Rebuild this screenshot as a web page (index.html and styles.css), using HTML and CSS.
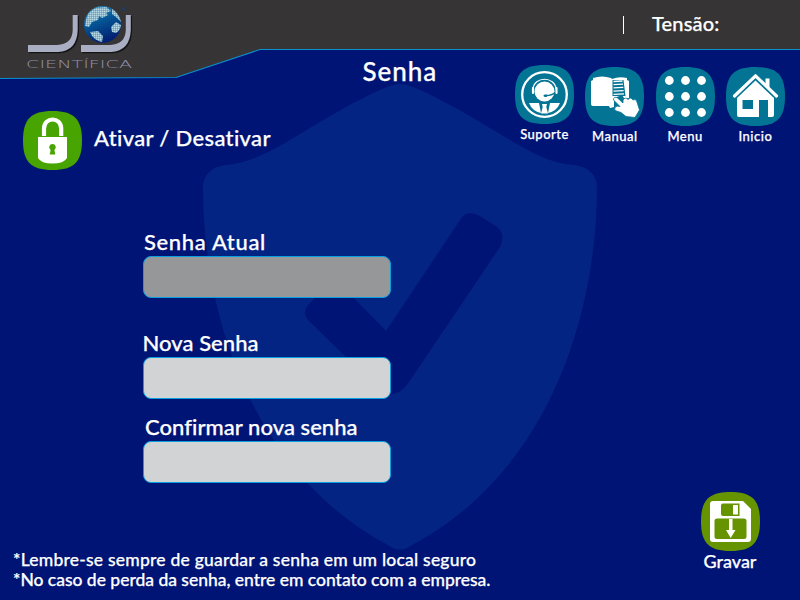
FILE: index.html
```html
<!DOCTYPE html>
<html lang="pt-BR">
<head>
<meta charset="utf-8">
<title>Senha</title>
<link rel="stylesheet" href="styles.css">
</head>
<body>
<div class="screen">
  <svg class="backdrop" viewBox="0 0 800 600" aria-hidden="true">
    <path fill="#042484" d="M400 84C395 84 389 86 382 89C342 107 306 131 283 144C262 156 245 163 226 165C211 167 203 175 203 188C203 300 243 468 388 545Q400 554 412 545C557 468 597 300 597 188C597 175 589 167 574 165C555 164 538 156 517 144C494 131 458 107 418 89C411 86 405 84 400 84Z"/>
    <path fill="#001475" d="M462 217Q468 210 480 216L497 227Q506 234 500 247L407 385Q395 399 382 392L309 321Q301 313 309 304L317 296Q334 284 352 296L386 331Z"/>
    <path fill="#373435" d="M0 0H800V49.500H260L176 77.500L0 78.500Z"/>
    <path fill="none" stroke="#0b8fce" stroke-width="1.100" d="M0 78.500L176 77.500L260 49.500H800"/>
  </svg>

  <header class="header">
    <svg class="logo" viewBox="0 0 125 78" width="125" height="78">
      <defs>
        <linearGradient id="sea" x1="0" y1="0" x2="0.400" y2="1"><stop offset="0" stop-color="#4aa9d1"/><stop offset=".5" stop-color="#075b9c"/><stop offset="1" stop-color="#001b70"/></linearGradient>
        <pattern id="mesh" width="2" height="2" patternUnits="userSpaceOnUse"><path d="M0 0H2M0 0V2" stroke="#003d78" stroke-width=".7" opacity=".65"/></pattern>
        <g id="hooks"><path d="M13 45H42Q57.500 44 57.700 30V15H62.700V30Q62 51 43 52H13Z"/><path d="M66 45H95Q110.500 44 110.800 30V15H115.800V30Q115 51 96 52H66Z"/></g>
      </defs>
      <use href="#hooks" x="1.300" y="1.300" fill="#151517"/>
      <use href="#hooks" fill="#a9aec3"/>
      <circle cx="87.500" cy="24.500" r="18.500" fill="url(#sea)"/>
      <path fill="#b9d9e4" d="M71 20Q73 11 81 8L91 7L96 11L91 13L93 15L87 18L84 16L83 20L77 22L74 27L70 26ZM97 9Q104 13 106 22L101 17L97 14ZM101 22L106 25Q105 31 101 33L97 32L96 27ZM75 32L83 31L88 36L87 42Q78 40 75 32Z"/>
      <circle cx="87.500" cy="24.500" r="18.500" fill="url(#mesh)"/>
      <circle cx="108.500" cy="9" r="2" fill="#243a58"/>
      <text class="logo-name" x="11" y="68" textLength="106" lengthAdjust="spacingAndGlyphs">CIENTÍFICA</text>
    </svg>
    <div class="status"><span class="divider"></span><span class="tension">Tensão:</span></div>
  </header>

  <section class="toolbar">
    <div class="lock">
      <svg class="tile" viewBox="0 0 59 59">
        <path fill="#48a400" d="M29.500 0C51 0 59 8 59 29.500S51 59 29.500 59S0 51 0 29.500S8 0 29.500 0Z"/>
        <path fill="none" stroke="#fff" stroke-width="4.200" d="M21 25V17.500C21 5.500 38.200 5.500 38.200 17.500V25"/>
        <path fill="#fff" d="M15 26H44V47Q41 52.500 29.500 52.500T15 47Z"/>
        <path fill="#48a400" d="M29.500 33A3.300 3.300 0 0 0 27.600 39L26.700 43.500H32.300L31.400 39A3.300 3.300 0 0 0 29.500 33Z"/>
      </svg>
      <span class="lock-label">Ativar / Desativar</span>
    </div>
    <h1 class="title">Senha</h1>
    <nav class="nav">
      <a class="nav-item nav-support">
        <svg class="tile" viewBox="0 0 59 59">
          <path fill="#047494" d="M29.500 0C51 0 59 8 59 29.500S51 59 29.500 59S0 51 0 29.500S8 0 29.500 0Z"/>
          <circle cx="29.500" cy="29.500" r="22.300" fill="none" stroke="#fff" stroke-width="2.300"/>
          <circle cx="29.500" cy="26.500" r="10" fill="#fff"/>
          <path fill="none" stroke="#fff" stroke-width="1.200" d="M18 24C19 11 40 11 41 24"/>
          <path fill="none" stroke="#fff" stroke-width="2.200" stroke-linecap="round" d="M18 23V28M41.500 23V28"/>
          <path fill="none" stroke="#047494" stroke-width="1.300" d="M40 27.500Q37 30.500 31 30.500"/>
          <ellipse cx="30.500" cy="30.700" rx="2" ry="1.200" fill="#047494"/>
          <path fill="#fff" d="M14 38H24L26 48Q17 46 14 38ZM45 38H35L33 48Q42 46 45 38ZM27 39H32L31.300 42L33 48.500H26L27.700 42Z"/>
        </svg>
        <span>Suporte</span>
      </a>
      <a class="nav-item nav-manual">
        <svg class="tile" viewBox="0 0 59 59">
          <path fill="#047494" d="M29.500 0C51 0 59 8 59 29.500S51 59 29.500 59S0 51 0 29.500S8 0 29.500 0Z"/>
          <path fill="#fff" d="M6 14L8 13V11Q17 8 26 11L27 12Q34 9 42 11V13L44 14V31H39L37 28L29 31V40L25 41L24 39H8Q6 39 6 37Z"/>
          <path fill="#047494" d="M27.500 13H38.500L40.500 29H27.500Z"/>
          <path fill="none" stroke="#fff" stroke-width="1.300" d="M28.500 14.500L37.500 14M28.500 17.700L38 17.200M28.500 20.900L38.300 20.400M28.500 24.100L38.600 23.600M28.500 27.300L39 26.800"/>
          <path fill="#fff" stroke="#047494" stroke-width=".8" d="M28.500 33Q28.500 29.500 32 30.500L38 36V33Q40.500 29.500 43 32.500Q46 29.500 48 33Q51 31 52 35L54.500 43L50 50.500L41 49.500L36 45.500L30 43.500Q28.500 40.500 32 39L35 39.500Z"/>
        </svg>
        <span>Manual</span>
      </a>
      <a class="nav-item nav-menu">
        <svg class="tile" viewBox="0 0 59 59">
          <path fill="#047494" d="M29.500 0C51 0 59 8 59 29.500S51 59 29.500 59S0 51 0 29.500S8 0 29.500 0Z"/>
          <g fill="#fff"><circle cx="13.300" cy="13.500" r="4.400"/><circle cx="29.500" cy="13.500" r="4.400"/><circle cx="45.500" cy="13.500" r="4.400"/><circle cx="13.300" cy="29.500" r="4.400"/><circle cx="29.500" cy="29.500" r="4.400"/><circle cx="45.500" cy="29.500" r="4.400"/><circle cx="13.300" cy="45.500" r="4.400"/><circle cx="29.500" cy="45.500" r="4.400"/><circle cx="45.500" cy="45.500" r="4.400"/></g>
        </svg>
        <span>Menu</span>
      </a>
      <a class="nav-item nav-home">
        <svg class="tile" viewBox="0 0 59 59">
          <path fill="#047494" d="M29.500 0C51 0 59 8 59 29.500S51 59 29.500 59S0 51 0 29.500S8 0 29.500 0Z"/>
          <path fill="none" stroke="#fff" stroke-width="3.200" stroke-linecap="round" stroke-linejoin="round" d="M8.500 29L29.500 8.800L50.500 29"/>
          <path fill="#fff" d="M39.500 11.500H43.500V21L39.500 17ZM29.500 13.500L48 31V48Q48 50 46 50H42V33H33V50H13Q11 50 11 48V31Z"/>
          <path fill="#047494" d="M16.500 33H27V42H16.500Z"/>
        </svg>
        <span>Inicio</span>
      </a>
    </nav>
  </section>

  <form class="form">
    <label class="field current"><span class="caption">Senha Atual</span><input type="password" disabled></label>
    <label class="field new"><span class="caption">Nova Senha</span><input type="password"></label>
    <label class="field confirm"><span class="caption">Confirmar nova senha</span><input type="password"></label>
  </form>

  <footer class="footer">
    <div class="notes">
      <p class="note-safe">*Lembre-se sempre de guardar a senha em um local seguro</p>
      <p class="note-lost">*No caso de perda da senha, entre em contato com a empresa.</p>
    </div>
    <div class="save">
      <svg class="tile" viewBox="0 0 59 59">
        <path fill="#659400" d="M29.500 0C51 0 59 8 59 29.500S51 59 29.500 59S0 51 0 29.500S8 0 29.500 0Z"/>
        <path fill="#fff" d="M12 9H42L50 17V47Q50 50 47 50H12Q9 50 9 47V12Q9 9 12 9Z"/>
        <path fill="#659400" d="M22 11.500H38.500V24H22Q20 24 20 22V13.500Q20 11.500 22 11.500ZM16 26.500H43Q45.500 26.500 45.500 29V44.500Q45.500 47 43 47H16Q13.500 47 13.500 44.500V29Q13.500 26.500 16 26.500Z"/>
        <path fill="#fff" d="M32 13H37V22.500H32ZM28 27H31.500V38H34.500L29.700 46L25 38H28Z"/>
      </svg>
      <span>Gravar</span>
    </div>
  </footer>
</div>
</body>
</html>
```
FILE: styles.css
```css
* { box-sizing: border-box; }
body { margin: 0; }
.screen {
  position: relative;
  display: flex;
  flex-direction: column;
  width: 800px;
  height: 600px;
  overflow: hidden;
  background: #001475;
  color: #fff;
  font-family: Lato, "Noto Sans", sans-serif;
  font-weight: 500;
  -webkit-text-stroke: .25px currentColor;
  white-space: nowrap;
}
.backdrop { position: absolute; inset: 0; width: 800px; height: 600px; }
.header, .toolbar, .form, .footer { position: relative; }
.header {
  display: flex;
  justify-content: space-between;
  align-items: flex-start;
  height: 50px;
  padding: 0 80px 0 15px;
}
.logo { flex: none; }
.logo-name { font: 11px "DejaVu Sans", sans-serif; font-weight: 200; fill: #8e92a8; -webkit-text-stroke: 0; }
.status { display: flex; align-items: flex-start; gap: 28px; height: 49px; }
.divider { width: 1.5px; height: 18px; margin-top: 16px; background: #fff; }
.tension { width: 68px; font-size: 20px; line-height: 44px; margin-top: 1px; letter-spacing: .15px; }
.toolbar {
  display: grid;
  grid-template-columns: 340px 151px 1fr;
  height: 120px;
  padding-left: 23px;
}
.tile { display: block; flex: none; width: 59px; height: 59px; }
.lock { display: flex; align-items: center; gap: 12.5px; height: 59px; margin: 61px 0 0 -.5px; }
.lock-label { font-size: 22px; line-height: 28px; margin-top: -6px; letter-spacing: .34px; }
.title { margin: 6px 0 0 -.5px; font-size: 26px; font-weight: 500; line-height: 30px; letter-spacing: .95px; }
.nav { display: flex; align-items: flex-start; gap: 11.300px; margin: 17px 0 0 1px; }
.nav-item {
  display: flex;
  flex-direction: column;
  align-items: center;
  width: 59px;
  font-size: 13px;
  line-height: 20px;
  letter-spacing: .5px;
}
.nav-support { margin-top: -2px; }
.form { display: flex; flex-direction: column; width: 248px; margin: 58px 0 0 143px; }
.field { display: flex; flex-direction: column; }
.caption { font-size: 22px; line-height: 28px; letter-spacing: .05px; }
.current .caption { padding-left: 1px; letter-spacing: .65px; }
.new { margin-top: 31px; }
.new .caption { margin-left: -.5px; }
.confirm { margin-top: 14px; }
.confirm .caption { padding-left: 2px; }
.field input {
  width: 248px;
  height: 42px;
  padding: 0 10px;
  border: 1px solid #0aa0e0;
  border-radius: 8px;
  background: #d2d3d5;
}
.field input:disabled { background: #969799; }
.footer {
  display: flex;
  justify-content: space-between;
  align-items: flex-end;
  margin-top: auto;
  padding: 0 40.5px 10px 13px;
}
.notes { font-size: 17.5px; line-height: 20px; }
.notes p { margin: 0; }
.note-safe { letter-spacing: .22px; }
.note-lost { letter-spacing: -.02px; }
.save { display: flex; flex-direction: column; align-items: center; width: 59px; margin-bottom: 18px; font-size: 18px; line-height: 21px; }
```
